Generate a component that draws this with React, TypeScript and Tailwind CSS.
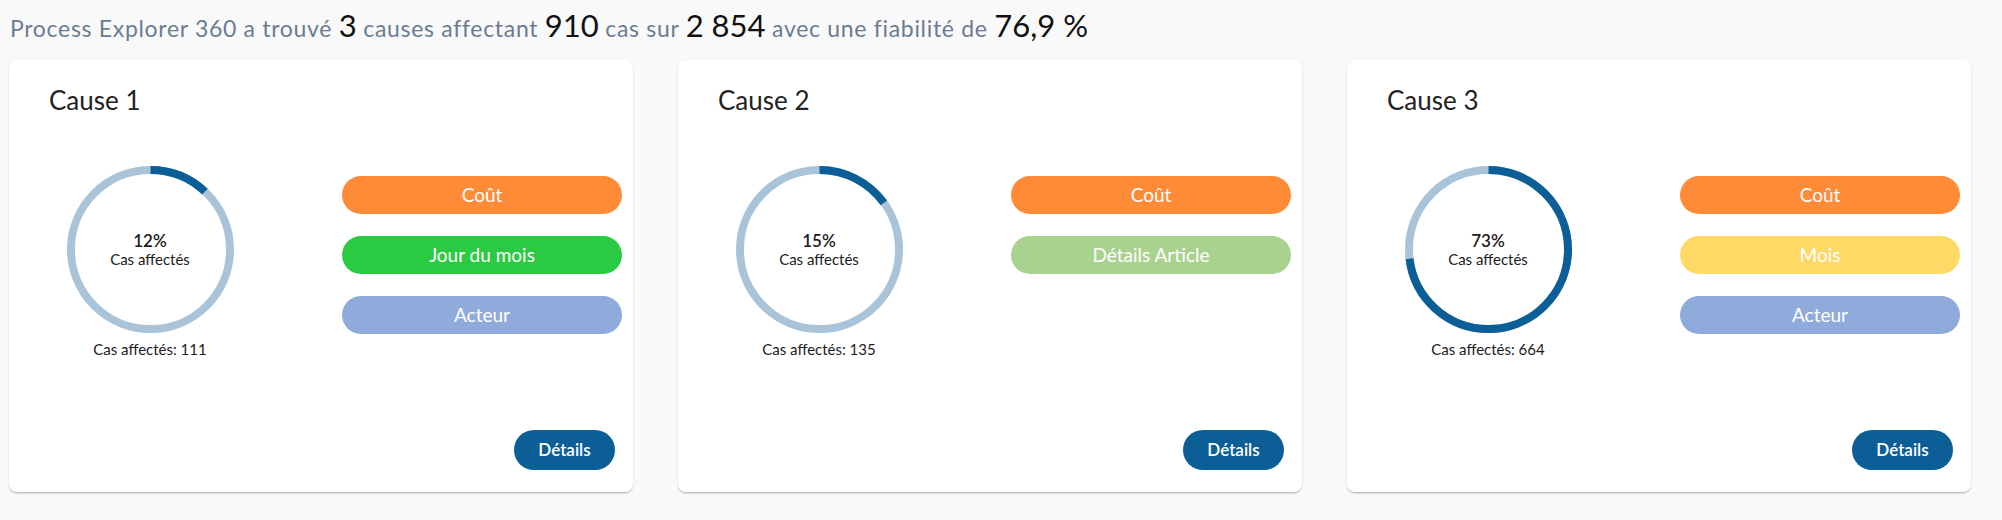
const causes = [
  {
    title: 'Cause 1',
    percent: 12,
    count: 111,
    tags: [
      { label: 'Coût', color: 'bg-[#ff8b37]' },
      { label: 'Jour du mois', color: 'bg-[#2acb42]' },
      { label: 'Acteur', color: 'bg-[#8fabdc]' },
    ],
  },
  {
    title: 'Cause 2',
    percent: 15,
    count: 135,
    tags: [
      { label: 'Coût', color: 'bg-[#ff8b37]' },
      { label: 'Détails Article', color: 'bg-[#a9d28e]' },
    ],
  },
  {
    title: 'Cause 3',
    percent: 73,
    count: 664,
    tags: [
      { label: 'Coût', color: 'bg-[#ff8b37]' },
      { label: 'Mois', color: 'bg-[#ffd966]' },
      { label: 'Acteur', color: 'bg-[#8fabdc]' },
    ],
  },
];

const Ring = ({ percent }: { percent: number }) => {
  const r = 79.5;
  const c = 2 * Math.PI * r;
  return (
    <div className="relative w-[167px] h-[167px]">
      <svg width="167" height="167" viewBox="0 0 167 167" className="-rotate-90">
        <circle cx="83.5" cy="83.5" r={r} fill="none" stroke="#a9c4d8" strokeWidth="8" />
        <circle
          cx="83.5"
          cy="83.5"
          r={r}
          fill="none"
          stroke="#0b5e96"
          strokeWidth="8"
          strokeDasharray={`${(c * percent) / 100} ${c}`}
        />
      </svg>
      {/* label in the middle */}
      <div className="absolute inset-0 flex flex-col items-center justify-center text-[#1c1c1c]">
        <span className="text-[17px] leading-[18px] font-semibold">{percent}%</span>
        <span className="text-[15px] leading-[18px]">Cas affectés</span>
      </div>
    </div>
  );
};

const CauseCard = ({ cause }: { cause: (typeof causes)[number] }) => (
  <div className="w-[624px] h-[432px] bg-white rounded-lg shadow-[0_2px_2px_-1px_rgba(0,0,0,0.25),0_1px_3px_rgba(0,0,0,0.1)] flex flex-col pl-10 pr-[18px] pt-[25px] pb-[22px]">
    <h2 className="text-[26px] leading-[30px] text-[#222]">{cause.title}</h2>
    <div className="flex mt-[51px]">
      <div className="w-[202px] shrink-0 flex flex-col items-center">
        <Ring percent={cause.percent} />
        <p className="mt-[6px] text-[15px] leading-[20px] text-[#1c1c1c]">Cas affectés: {cause.count}</p>
      </div>
      <div className="ml-[91px] w-[280px] shrink-0 pt-[10px] flex flex-col gap-[22px]">
        {cause.tags.map((t) => (
          <div
            key={t.label}
            className={`${t.color} h-[38px] rounded-full flex items-center justify-center text-white text-[19px]`}
          >
            {t.label}
          </div>
        ))}
      </div>
    </div>
    <div className="mt-auto flex justify-end">
      <button className="w-[101px] h-10 rounded-full bg-[#0b5e96] text-white text-[17px] font-semibold">
        Détails
      </button>
    </div>
  </div>
);

export default function App() {
  return (
    <div className="w-full h-[520px] bg-[#f9f9f9] font-['Lato',sans-serif]">
      <div className="pl-[10px] pt-[7px] h-[60px] text-[23px] leading-[36px] text-[#6b7c93] tracking-[0.03em]">
        Process Explorer 360 a trouvé <span className="text-[31px] tracking-normal text-[#111]">3</span> causes affectant{' '}
        <span className="text-[31px] tracking-normal text-[#111]">910</span> cas sur{' '}
        <span className="text-[31px] tracking-normal text-[#111]">2 854</span> avec une fiabilité de{' '}
        <span className="text-[31px] tracking-normal text-[#111]">76,9 %</span>
      </div>
      <div className="flex gap-[45px] pl-[9px]">
        {causes.map((c) => (
          <CauseCard key={c.title} cause={c} />
        ))}
      </div>
    </div>
  );
}
